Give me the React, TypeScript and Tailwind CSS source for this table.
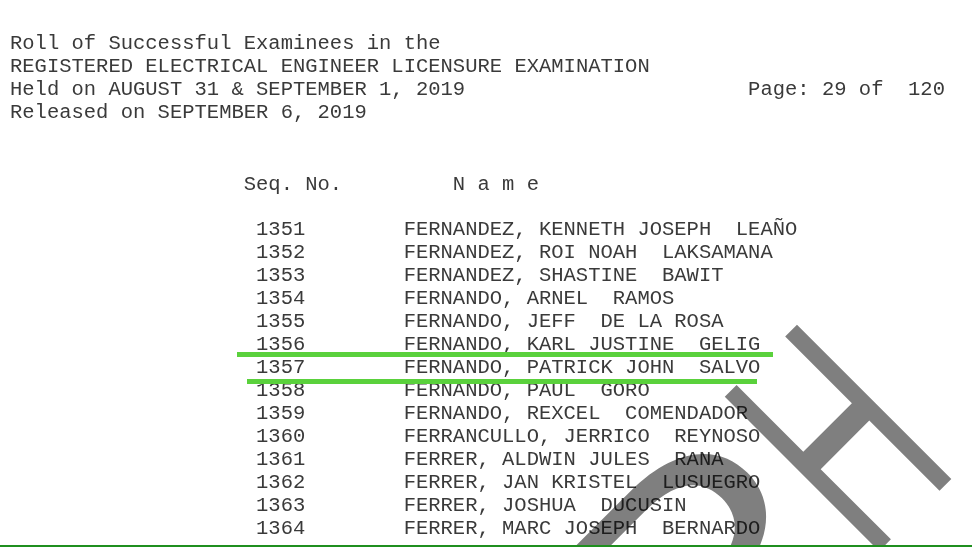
import React from "react";

const rows: [string, string][] = [
  ["1351", "FERNANDEZ, KENNETH JOSEPH  LEAÑO"],
  ["1352", "FERNANDEZ, ROI NOAH  LAKSAMANA"],
  ["1353", "FERNANDEZ, SHASTINE  BAWIT"],
  ["1354", "FERNANDO, ARNEL  RAMOS"],
  ["1355", "FERNANDO, JEFF  DE LA ROSA"],
  ["1356", "FERNANDO, KARL JUSTINE  GELIG"],
  ["1357", "FERNANDO, PATRICK JOHN  SALVO"],
  ["1358", "FERNANDO, PAUL  GORO"],
  ["1359", "FERNANDO, REXCEL  COMENDADOR"],
  ["1360", "FERRANCULLO, JERRICO  REYNOSO"],
  ["1361", "FERRER, ALDWIN JULES  RANA"],
  ["1362", "FERRER, JAN KRISTEL  LUSUEGRO"],
  ["1363", "FERRER, JOSHUA  DUCUSIN"],
  ["1364", "FERRER, MARC JOSEPH  BERNARDO"],
];

export default function App() {
  return (
    <div className="relative h-[547px] w-[972px] overflow-hidden border-b-2 border-[#1f8f1f] bg-white font-['Liberation_Mono',monospace] text-[20.5px] leading-[23px] text-[#3a3a3a]">
      {/* Header */}
      <div className="whitespace-pre pl-[10px] pt-[32px]">
        <div>Roll of Successful Examinees in the</div>
        <div>REGISTERED ELECTRICAL ENGINEER LICENSURE EXAMINATION</div>
        <div className="flex">
          <span className="w-[60ch]">Held on AUGUST 31 &amp; SEPTEMBER 1, 2019</span>
          <span>Page: 29 of  120</span>
        </div>
        <div>Released on SEPTEMBER 6, 2019</div>
      </div>

      {/* Table */}
      <div className="mt-[49px] pl-[10px]">
        <div className="flex whitespace-pre">
          <span className="ml-[19ch] w-[17ch]">Seq. No.</span>
          <span>N a m e</span>
        </div>
        <div className="mt-[22px]">
          {rows.map(([seq, name]) => (
            <div key={seq} className="flex whitespace-pre">
              <span className="ml-[20ch] w-[12ch]">{seq}</span>
              <span>{name}</span>
            </div>
          ))}
        </div>
      </div>

      {/* Highlight marks */}
      <div className="absolute left-[237px] top-[352px] h-[5px] w-[536px] bg-[#5ad13c]" />
      <div className="absolute left-[247px] top-[379px] h-[5px] w-[510px] bg-[#5ad13c]" />

      {/* Watermark */}
      <div className="pointer-events-none absolute left-[508px] top-[556px] origin-top-left -rotate-45 mix-blend-multiply">
        <div className="flex font-['Inter',sans-serif] text-[300px] font-normal leading-none text-[#7f7f7f]">
          <span className="inline-block origin-left scale-x-[1.3]">P</span>
          <span className="ml-[58px] inline-block origin-left scale-x-[0.6]">H</span>
        </div>
      </div>
    </div>
  );
}
